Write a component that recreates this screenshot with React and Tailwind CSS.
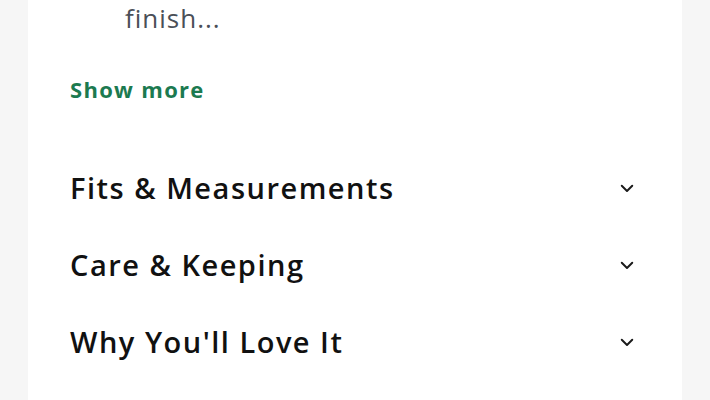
import React from "react";

const sections = ["Fits & Measurements", "Care & Keeping", "Why You'll Love It"];

const Chevron = () => (
  <svg width="18" height="18" viewBox="0 0 24 24" fill="none" stroke="#1a1a1a" strokeWidth="2.6" strokeLinecap="round" strokeLinejoin="round">
    <path d="M5 9l7 7 7-7" />
  </svg>
);

export default function App() {
  return (
    <div className="min-h-[400px] w-full bg-[#f6f6f6] px-[28px]" style={{ fontFamily: "'Open Sans', 'Noto Sans', sans-serif" }}>
      <div className="h-[400px] overflow-hidden bg-white pl-[42px] pr-[46px]">
        <p className="pl-[55px] text-[26px] leading-[36px] tracking-[1px] text-[#4a4f57]">finish...</p>
        <button className="mt-[38px] text-[22px] font-bold leading-[30px] tracking-[1.3px] text-[#1c7a50]">Show more</button>
        <div className="mt-[45px]">
          {sections.map((s) => (
            <div key={s} className="flex h-[77px] items-center justify-between">
              <h3 className="text-[29px] font-semibold tracking-[1.5px] text-[#111111]">{s}</h3>
              <Chevron />
            </div>
          ))}
        </div>
      </div>
    </div>
  );
}
